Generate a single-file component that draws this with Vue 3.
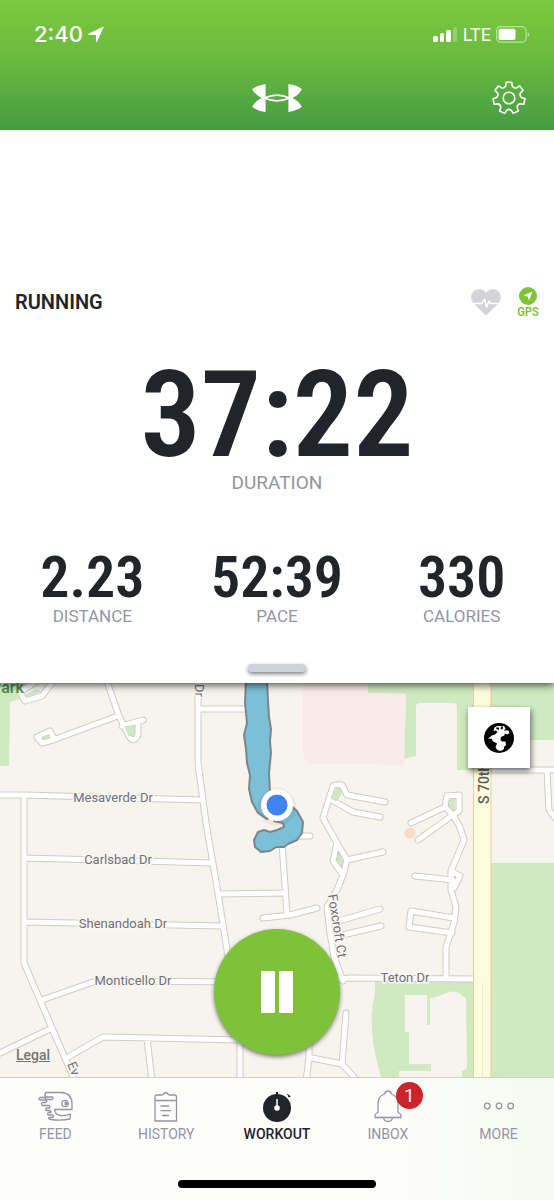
<script setup>
import { ref, computed } from 'vue'

const paused = ref(false)
const activeTab = ref('workout')

const stats = [
  { label: 'DISTANCE', value: '2.23' },
  { label: 'PACE', value: '52:39' },
  { label: 'CALORIES', value: '330' }
]

const tabs = [
  { id: 'feed', label: 'FEED' },
  { id: 'history', label: 'HISTORY' },
  { id: 'workout', label: 'WORKOUT' },
  { id: 'inbox', label: 'INBOX', badge: 1 },
  { id: 'more', label: 'MORE' }
]

// seven teeth around the hub
const gearPath = computed(() => {
  const teeth = 7
  const at = (deg, r) => {
    const a = (deg * Math.PI) / 180
    return `${(17 + r * Math.cos(a)).toFixed(2)} ${(17 + r * Math.sin(a)).toFixed(2)}`
  }
  let d = ''
  for (let i = 0; i < teeth; i++) {
    const mid = -90 + (i * 360) / teeth
    d += `${i ? 'L' : 'M'}${at(mid - 15, 12.5)} L${at(mid - 10, 16)} L${at(mid + 10, 16)} L${at(mid + 15, 12.5)} Q${at(mid + 25.7, 10.5)} ${at(mid + 36.4, 12.5)} `
  }
  return d + 'Z'
})

const streets = [
  'M106 -4L119 33L128 51Q133 62 138 52V39M122 43L143 37',
  'M115 34L53 57L42 60L37 54L50 48L54 56',
  'M20 9L25 18L42 13L54 -3M20 9L34 0',
  'M198 -4V80L206 140L218 210L227 267L233 310',
  'M198 26H262',
  'M0 112H24L202 117',
  'M24 112V280L52 345L75 398',
  'M24 175L213 180',
  'M24 239L222 243',
  'M42 317L93 299L110 298L240 299',
  'M0 370L52 345',
  'M68 374L103 354L240 357V398M147 355L152 398',
  'M218 211L283 210M282 160L287 231M263 235L290 232L317 225M287 153H310',
  'M323 135L333 103Q335 101 342 102L347 112L385 119M332 117L353 129L380 134',
  'M323 135L337 160L347 177L343 192L337 207L327 224L330 250L334 274L343 298',
  'M337 160L333 178L343 192M347 177L383 169',
  'M332 240L380 226M334 254L381 243',
  'M270 302L350 295L474 296',
  'M445 124L447 113L459 112V128L453 132L445 124L411 140M453 132L418 157',
  'M453 132L460 144L464 157L451 188V207L456 224L454 240L446 264V296',
  'M451 188L460 193L454 205M453 197L415 193',
  'M454 235L411 228L409 244L452 250',
  'M346 330L342 381L354 394L356 400M342 381L312 375M309 350V375L306 398',
  'M491 87H558M547 87L549 127L558 138'
].join('')

const names = [
  { text: 'Mesaverde Dr', x: 113, y: 119 },
  { text: 'Carlsbad Dr', x: 118, y: 181 },
  { text: 'Shenandoah Dr', x: 123, y: 245 },
  { text: 'Monticello Dr', x: 133, y: 302 },
  { text: 'Teton Dr', x: 405, y: 299 }
]
</script>

<template>
  <div class="app">
    <header class="header">
      <div class="status">
        <div class="status-side">
          <span class="clock">2:40</span>
          <svg width="16" height="17" viewBox="0 0 16 17"><path d="M15 0.8Q16 0.4 15.4 1.8L9 15.8Q8.3 17 8 15.4V9H1Q-0.5 8.6 0.8 7.6Z" fill="#fff" /></svg>
        </div>
        <div class="status-side">
          <svg width="25" height="17" viewBox="0 0 25 17" fill="#fff">
            <rect x="0" y="10" width="5" height="6" rx="1.5" />
            <rect x="7" y="7" width="4" height="9" rx="1.5" />
            <rect x="13" y="4" width="5" height="12" rx="1.5" />
            <rect x="20" y="1" width="4" height="15" rx="1.5" opacity="0.25" />
          </svg>
          <span class="network">LTE</span>
          <svg width="34" height="17" viewBox="0 0 34 17">
            <rect x="0.6" y="0.6" width="29.4" height="15.6" rx="4" fill="none" stroke="#fff" stroke-width="1.2" opacity="0.5" />
            <rect x="2.5" y="2.8" width="17" height="11.2" rx="2" fill="#fff" />
            <path d="M31.6 6V11Q33.4 10 33.4 8.5Q33.4 7 31.6 6" fill="#fff" opacity="0.5" />
          </svg>
        </div>
      </div>
      <div class="nav">
        <svg class="logo" width="50" height="28" viewBox="0 0 48 27">
          <g fill="#fff">
            <path d="M0 5Q5 1 13 0V27Q5 26 0 22Q3 16.5 9 13.5Q3 10.5 0 5Z" />
            <path d="M48 5Q43 1 35 0V27Q43 26 48 22Q45 16.5 39 13.5Q45 10.5 48 5Z" />
          </g>
          <path d="M12 13.5Q24 8 36 13.5Q24 19 12 13.5Z" fill="none" stroke="#fff" stroke-width="1.7" />
        </svg>
        <button class="gear" aria-label="Settings">
          <svg width="34" height="34" viewBox="0 0 34 34" fill="none" stroke="#fff" stroke-width="1.6" stroke-linejoin="round">
            <path :d="gearPath" />
            <circle cx="17" cy="17" r="5.8" />
          </svg>
        </button>
      </div>
    </header>

    <main class="sheet">
      <div class="activity">
        <h1 class="title">RUNNING</h1>
        <div class="sensors">
          <svg width="30" height="27" viewBox="0 0 30 27">
            <path d="M15 26.5L2.5 14.5Q-1.5 9 1.2 4.3C4 -0.5 11.5 -1.5 15 4C18.5 -1.5 26 -0.5 28.8 4.3Q31.5 9 27.5 14.5Z" fill="#d3d3da" />
            <path d="M1 14.4H11L13.5 10L15.5 18L18 12L19.3 14.4H29" fill="none" stroke="#fff" stroke-width="1.5" stroke-linejoin="round" />
          </svg>
          <div class="gps">
            <svg width="18" height="18" viewBox="0 0 18 18">
              <circle cx="9" cy="9" r="9" fill="#7fc137" />
              <path d="M13.5 4.5L9.8 13.5L8.8 9.6L4.3 8.6Z" fill="#fff" />
            </svg>
            <span>GPS</span>
          </div>
        </div>
      </div>

      <div class="duration">
        <div class="duration-value">37:22</div>
        <div class="duration-label">DURATION</div>
      </div>

      <div class="stats">
        <div v-for="s in stats" :key="s.label" class="stat">
          <div class="stat-value">{{ s.value }}</div>
          <div class="stat-label">{{ s.label }}</div>
        </div>
      </div>

      <div class="handle"></div>
    </main>

    <section class="map">
      <svg class="map-canvas" viewBox="0 0 554 394" preserveAspectRatio="xMidYMid slice">
        <rect width="554" height="394" fill="#f7f4ed" />
        <!-- parks and lots -->
        <g fill="#d0eac0">
          <path d="M0 0H30L20 16L10 19L9 83H0Z" />
          <path d="M368 0H474V87H457V24Q457 20 453 20H420Q416 20 416 24V73L404 76L406 11L368 10Z" />
          <path d="M491 0H554V57H491ZM491 180H554V394H491Z" />
          <path d="M375 298H474V394H381Q366 345 375 310Z" />
        </g>
        <path d="M303 0H368V10L406 11L404 84Q390 80 313 81Q303 79 303 70Z" fill="#f8ebea" />
        <path d="M405 312H427V342H430V315Q438 314 444 311Q457 305 463 314H466L467 385L462 388V394H399V388H431V381H409V349H405Z" fill="#f7f4ed" />
        <circle cx="410" cy="150" r="5.5" fill="#f8dcc4" />

        <!-- streets, casing first -->
        <path :d="streets" class="street casing" />
        <path :d="streets" class="street" />
        <g fill="#d0eac0" stroke="#c4cdb9" stroke-width="0.6">
          <path d="M125 44L135 42L134 51L129 53Z" />
          <path d="M42 54L49 52L50 55L44 57Z" />
          <path d="M26 12L36 7L40 8L29 14Z" />
          <path d="M335 105H340L341 111L336 118L331 115Z" />
          <path d="M448 118L454 116V127L449 124Z" />
          <path d="M338 169L343 179L341 184L337 178Z" />
        </g>

        <!-- highway -->
        <rect x="473.5" y="-2" width="17.5" height="398" fill="#fdfcdc" stroke="#efc9a0" />
        <path d="M482.5 300V394" stroke="#f3ecc0" />

        <g class="street-name">
          <text v-for="n in names" :key="n.text" :x="n.x" :y="n.y">{{ n.text }}</text>
          <text transform="translate(195 1) rotate(90)">Dr</text>
          <text transform="translate(328 212) rotate(81)">Foxcroft Ct</text>
          <text transform="translate(67 381) rotate(67)">Ev</text>
        </g>
        <text class="highway-name" transform="translate(489 121) rotate(-90)">S 70th</text>
        <text class="park-name" x="-9" y="10">Park</text>

        <!-- recorded route -->
        <g class="route">
          <path d="M246 -4L245 20L247 40L244 52L246 66L247 80L250 92L249 106L252 119L258 130L267 136L277 128L270 110L269 90L271 70L270 58L271 46L269 34L268 18L267 -4Z" />
          <path d="M290 122L297 128L303 139L302 150L297 157L288 161L284 164L276 164L270 168L261 169L255 164L254 157L258 149L264 147L270 149L277 147L284 144L283 140L274 138Z" />
        </g>
        <circle cx="277" cy="124" r="19" fill="#000" opacity="0.05" />
        <circle cx="277" cy="122" r="16" fill="#fff" />
        <circle cx="277" cy="122" r="10.5" fill="#3f83f1" />
      </svg>

      <button class="layers" aria-label="Map type">
        <svg width="30" height="30" viewBox="0 0 30 30">
          <circle cx="15" cy="15" r="15" fill="#000" />
          <path d="M4 15.5L8 12.5L11 11.5L13.5 9L12 7.5L9.5 8L10.5 4.5L13 3H20L21.5 5.5L20 7.5H24.5L25.5 10L23.5 11.5L20.5 10.5V12.5L17 14L16.5 17L18 18.5H21.5L22 22L20 24V26L17.5 27.8L14 27.5L11.5 24.5L13 20.5L8.5 18L8 15.8Z" fill="#fff" />
          <path d="M12 4.5H15V7L12.5 6ZM17 3.5H19L18.5 6.5L16.5 6Z" fill="#000" />
        </svg>
      </button>

      <a class="legal" href="#legal">Legal</a>

      <button class="pause" :aria-label="paused ? 'Resume' : 'Pause'" @click="paused = !paused">
        <svg v-if="!paused" width="32" height="42" viewBox="0 0 32 42" fill="#fff">
          <rect x="0" y="0" width="14" height="42" rx="1" />
          <rect x="18" y="0" width="14" height="42" rx="1" />
        </svg>
        <svg v-else width="32" height="42" viewBox="0 0 32 42" fill="#fff"><path d="M2 0L32 21L2 42Z" /></svg>
      </button>
    </section>

    <nav class="tabbar">
      <div class="tabs">
        <button
          v-for="tab in tabs"
          :key="tab.id"
          class="tab"
          :class="{ active: activeTab === tab.id }"
          @click="activeTab = tab.id"
        >
          <span class="tab-icon">
            <svg v-if="tab.id === 'feed'" width="36" height="32" viewBox="0 0 36 32">
              <path d="M8.5 2.5H24Q35 3 35 14V19.5H17.5Q18 25 24 25.5Q30 25.8 33.5 24L33 29Q24 31 13.5 29.5Q11 29 12 27.5H16Q17 26 15.5 25H11.5Q9.5 24 11.5 22.5H14Q14.5 21 12.5 20.5H9Q8 19 9.5 18H12.5Q13.5 16 11.5 15.5H5.5Q3.5 14 5.5 12.5H9Q10.5 11 9 10H3Q1 9 3 7.5H8.5V9.5H15Q17 8 15.5 7H9Q7 5.5 8.5 2.5Z" />
              <circle cx="28" cy="13.5" r="3.2" />
              <path d="M28.2 12V15L30.5 13.5Z" fill="currentColor" />
            </svg>
            <svg v-else-if="tab.id === 'history'" width="24" height="32" viewBox="0 0 24 32">
              <path d="M1 31V10.5H22.5V31ZM1 10.5V7Q1 5 3 5H8Q9 5 9.5 4Q11.7 1.5 14 4Q14.5 5 15.5 5H20.5Q22.5 5 22.5 7V10.5M6.5 16H15M6.5 20.7H17M8 25.5H15" />
            </svg>
            <svg v-else-if="tab.id === 'workout'" width="32" height="32" viewBox="0 0 32 32">
              <g fill="currentColor" stroke="none">
                <circle cx="16" cy="18" r="14" />
                <path d="M15 2H17V6H15ZM26 3.5L30 6.5L27.5 7.5Z" />
              </g>
              <path d="M16 9V16" stroke="#fff" stroke-width="1.5" />
              <circle cx="16" cy="18" r="2.8" fill="#fff" stroke="none" />
            </svg>
            <svg v-else-if="tab.id === 'inbox'" width="28" height="34" viewBox="0 0 28 34">
              <path d="M1 28.5Q0.7 24.5 4 23.5V14Q4.5 7 10.5 5Q11.5 2 14 2Q16.5 2 17.5 5Q23.5 7 24 14V23.5Q27.3 24.5 27 28.5ZM9.5 28.5Q10 32.5 14 32.5Q18 32.5 18.5 28.5" />
            </svg>
            <svg v-else width="32" height="32" viewBox="0 0 32 32">
              <circle cx="4.3" cy="16" r="2.8" />
              <circle cx="16" cy="16" r="2.8" />
              <circle cx="27.7" cy="16" r="2.8" />
            </svg>
            <span v-if="tab.badge" class="badge">{{ tab.badge }}</span>
          </span>
          <span class="tab-label">{{ tab.label }}</span>
        </button>
      </div>
      <div class="home-indicator"></div>
    </nav>
  </div>
</template>

<style>
body {
  margin: 0;
  background: #fff;
}
</style>

<style scoped>
.app {
  display: flex;
  flex-direction: column;
  font-family: Roboto, "Liberation Sans", sans-serif;
  color: #212529;
}

button {
  border: none;
  padding: 0;
  font: inherit;
  color: inherit;
  cursor: pointer;
}

svg {
  display: block;
}

.header {
  position: relative;
  z-index: 2;
  background: linear-gradient(#7cc93f, #6abb3e 45%, #469b43);
  color: #fff;
  padding: 18px 24px 8px;
}

.status {
  display: flex;
  justify-content: space-between;
  align-items: center;
  height: 32px;
  padding-left: 10px;
}

.status-side {
  display: flex;
  align-items: center;
  gap: 5px;
}

.clock {
  font: 500 22px/32px Inter, sans-serif;
}

.network {
  font-size: 18px;
}

.nav {
  display: grid;
  grid-template-columns: 1fr auto 1fr;
  align-items: center;
  height: 48px;
  padding-top: 24px;
}

.logo {
  grid-column: 2;
}

.gear {
  justify-self: end;
  background: none;
  margin-right: 4px;
}

/* workout panel */
.sheet {
  position: relative;
  z-index: 1;
  background: #fff;
  box-shadow: 0 2px 8px rgba(0, 0, 0, 0.7);
  padding-top: 152px;
}

.activity {
  display: flex;
  justify-content: space-between;
  align-items: center;
  height: 40px;
  padding: 0 15px;
}

.title {
  margin: 0;
  font-size: 20px;
  font-weight: 600;
}

.sensors {
  display: flex;
  align-items: center;
  gap: 16px;
}

.gps {
  display: flex;
  flex-direction: column;
  align-items: center;
  color: #7fc137;
  font: 500 13px/13px "Roboto Condensed", Roboto, sans-serif;
}

.duration {
  text-align: center;
  padding-top: 37px;
}

.duration-value {
  font: 600 120px/112px "Roboto Condensed", Roboto, sans-serif;
}

.duration-label {
  font-size: 19px;
  line-height: 24px;
  color: #9495a1;
}

.stats {
  display: flex;
  padding-top: 53px;
}

.stat {
  flex: 1;
  text-align: center;
}

.stat-value {
  font: 600 58px/58px "Roboto Condensed", Roboto, sans-serif;
}

.stat-label {
  font-size: 17px;
  line-height: 20px;
  color: #9495a1;
}

.handle {
  width: 58px;
  height: 8px;
  margin: 38px auto 0;
  border-radius: 4px;
  background: #d2d2da;
  box-shadow: 0 2px 4px rgba(0, 0, 0, 0.5);
}

.sheet::after {
  content: "";
  display: block;
  height: 11px;
}

/* map */
.map {
  position: relative;
}

.map-canvas {
  width: 100%;
}

.street {
  fill: none;
  stroke: #fff;
  stroke-width: 5;
  stroke-linecap: round;
  stroke-linejoin: round;
}

.street.casing {
  stroke: #cfccc8;
  stroke-width: 7;
}

.street-name text {
  font-size: 13px;
  fill: #707074;
  stroke: #f9f7f2;
  stroke-width: 3;
  paint-order: stroke;
}

.street-name text:nth-child(-n + 5) {
  text-anchor: middle;
}

.highway-name {
  font-size: 14px;
  font-weight: 500;
  fill: #5f5f64;
  stroke: #fdfcdc;
  stroke-width: 2;
  paint-order: stroke;
}

.park-name {
  font-size: 16px;
  font-weight: 500;
  fill: #4f8a3f;
}

.route {
  fill: #7cc0d8;
  stroke: #7d858a;
  stroke-width: 2;
  stroke-linejoin: round;
}

.layers {
  position: absolute;
  top: 24px;
  right: 24px;
  width: 62px;
  height: 61px;
  display: flex;
  align-items: center;
  justify-content: center;
  background: #fff;
  box-shadow: 1px 3px 6px rgba(0, 0, 0, 0.6);
}

.legal {
  position: absolute;
  left: 16px;
  bottom: 12px;
  font-size: 14px;
  line-height: 20px;
  font-weight: 500;
  color: #77756f;
}

.pause {
  position: absolute;
  left: 50%;
  bottom: 22px;
  width: 126px;
  height: 126px;
  margin-left: -63px;
  display: flex;
  align-items: center;
  justify-content: center;
  border-radius: 50%;
  background: #80c13a;
  box-shadow: 0 2px 4px rgba(0, 0, 0, 0.5);
}

/* bottom navigation */
.tabbar {
  background: linear-gradient(90deg, #fdfdfc 70%, #f5fbf0);
  border-top: 1px solid #cfcfc9;
  padding-bottom: 12px;
}

.tabs {
  display: flex;
  height: 102px;
}

.tab {
  flex: 1;
  display: flex;
  flex-direction: column;
  align-items: center;
  background: none;
  padding-top: 10px;
  color: #9495a1;
}

.tab.active {
  color: #212529;
}

.tab-icon {
  position: relative;
  display: flex;
  align-items: center;
  height: 36px;
}

.tab-icon svg {
  fill: none;
  stroke: currentColor;
  stroke-width: 1.3;
  stroke-linejoin: round;
}

.tab-label {
  font-size: 14px;
  line-height: 20px;
}

.tab.active .tab-label {
  font-weight: 500;
}

.badge {
  position: absolute;
  left: 22px;
  top: -6px;
  width: 27px;
  height: 27px;
  border-radius: 50%;
  background: #cc2529;
  color: #fff;
  font-size: 19px;
  line-height: 27px;
}

.home-indicator {
  width: 198px;
  height: 8px;
  margin: 0 auto;
  border-radius: 4px;
  background: #000;
}
</style>
